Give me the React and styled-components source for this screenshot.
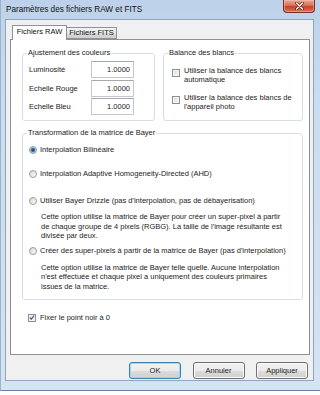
import React from 'react';
import styled, { createGlobalStyle } from 'styled-components';

const Global = createGlobalStyle`
  html, body { margin: 0; padding: 0; background: #ffffff; }
  body {
    width: 320px; height: 395px; overflow: hidden;
    font-family: "Liberation Sans", Arial, sans-serif;
    color: #1c1c1c;
  }
  *, *::before, *::after { box-sizing: border-box; }
`;

const Window = styled.div`
  width: 320px;
  height: 391px;
  display: flex;
  flex-direction: column;
  padding: 0 6px 9px 4px;
  background: linear-gradient(to bottom, #bdd2ea 0%, #cadcef 25%, #d5e3f2 100%);
  border-bottom: 1px solid #6a83a0;
  border-left: 1px solid #9db2cb;
`;

const TitleBar = styled.div`
  height: 19px;
  flex: none;
  display: flex;
  align-items: flex-start;
  justify-content: space-between;
  margin-right: -6px;
  padding-left: 1px;
`;

const Title = styled.div`
  font-size: 8.2px;
  line-height: 19px;
  color: #111;
  white-space: nowrap;
`;

const CloseButton = styled.div`
  width: 32px;
  height: 13px;
  margin-right: 5px;
  display: flex;
  align-items: center;
  justify-content: center;
  border: 1px solid #7a2f22;
  border-top: none;
  border-radius: 0 0 4px 4px;
  background: linear-gradient(to bottom, #e9a996 0%, #d9705a 45%, #c4432b 55%, #d5765b 100%);
  box-shadow: inset 0 0 0 1px rgba(255, 200, 180, 0.45);
`;

const Client = styled.div`
  flex: 1;
  display: flex;
  flex-direction: column;
  background: #f0f0f0;
  border: 1px solid #8fa5bf;
  padding: 5px 3px 0 4px;
`;

const TabRow = styled.div`
  display: flex;
  align-items: flex-end;
  height: 14px;
  padding-left: 2px;
  flex: none;
`;

const Tab = styled.div`
  position: relative;
  z-index: ${(p) => (p.$active ? 2 : 1)};
  width: ${(p) => p.$w}px;
  height: ${(p) => (p.$active ? 15 : 12)}px;
  margin-bottom: ${(p) => (p.$active ? -1 : 0)}px;
  margin-left: ${(p) => (p.$active ? 0 : -1)}px;
  border: 1px solid #8e9199;
  border-bottom: ${(p) => (p.$active ? 'none' : '1px solid #8e9199')};
  background: ${(p) =>
    p.$active ? '#ffffff' : 'linear-gradient(to bottom, #f3f3f3 0%, #ebebeb 50%, #dddddd 51%, #cfcfcf 100%)'};
  font-size: 7.5px;
  line-height: ${(p) => (p.$active ? 12 : 10)}px;
  text-align: center;
  white-space: nowrap;
  color: #111;
`;

const Panel = styled.div`
  flex: none;
  height: 316px;
  background: #ffffff;
  border: 1px solid #8e9199;
  padding: 8px 7px 0 11px;
  display: flex;
  flex-direction: column;
`;

const TopRow = styled.div`
  display: grid;
  grid-template-columns: 133px 140px;
  column-gap: 8px;
`;

const Group = styled.fieldset`
  margin: ${(p) => p.$mt || 0}px 0 0 0;
  padding: 0;
  min-width: 0;
  width: ${(p) => (p.$w ? `${p.$w}px` : 'auto')};
  height: ${(p) => p.$h}px;
  border: 1px solid #d5dfe5;
  border-radius: 3px;
`;

const Legend = styled.legend`
  margin-left: 4px;
  padding: 0 1px;
  font-size: 7.5px;
  line-height: 10px;
  color: #1c1c1c;
  white-space: nowrap;
`;

const GroupBody = styled.div`
  padding: ${(p) => p.$pad};
  display: flex;
  flex-direction: column;
  gap: ${(p) => p.$gap || 0}px;
`;

const FieldRow = styled.div`
  display: grid;
  grid-template-columns: 62px 43px;
  align-items: center;
  height: 17px;
  margin-bottom: ${(p) => p.$mb || 0}px;
`;

const Label = styled.span`
  font-size: 7.5px;
  line-height: 10px;
  white-space: nowrap;
`;

const Field = styled.input`
  width: 43px;
  height: 17px;
  margin: 0;
  padding: 0 3px 0 0;
  border: 1px solid #c4c7ce;
  border-top-color: #a4a8b0;
  background: #fff;
  font-family: "Liberation Sans", Arial, sans-serif;
  font-size: 7.5px;
  color: #1c1c1c;
  text-align: right;
  outline: none;
`;

const CheckRow = styled.div`
  display: flex;
  align-items: flex-start;
  gap: ${(p) => p.$gap}px;
  margin-top: ${(p) => p.$mt || 0}px;
  padding-left: ${(p) => p.$pl || 0}px;
`;

const Box = styled.span`
  flex: none;
  width: 8px;
  height: 8px;
  margin-top: ${(p) => p.$mt}px;
  border: 1px solid #8e8f8f;
  background: linear-gradient(135deg, #d6d6d6 0%, #ececec 55%, #fbfbfb 100%);
  box-shadow: inset 0 0 0 1px #f4f4f4;
  display: flex;
  align-items: center;
  justify-content: center;
`;

const CheckText = styled.span`
  font-size: 7.5px;
  line-height: ${(p) => p.$lh || 10}px;
  white-space: nowrap;
`;

const Radio = styled.span`
  flex: none;
  width: 8px;
  height: 8px;
  border-radius: 50%;
  border: 1px solid #9a9b9c;
  background: ${(p) =>
    p.$on
      ? 'radial-gradient(circle at 50% 50%, #0d3f78 0%, #2a6aa8 35%, #a9c4de 60%, #e6e6e6 100%)'
      : 'linear-gradient(135deg, #d4d4d4 0%, #eeeeee 60%, #fafafa 100%)'};
`;

const OptionRow = styled.div`
  display: flex;
  align-items: center;
  gap: 3px;
  height: 10px;
  margin-top: ${(p) => p.$mt}px;
`;

const Desc = styled.div`
  margin-left: 12px;
  margin-top: ${(p) => p.$mt}px;
  font-size: 7.5px;
  line-height: 9.6px;
  white-space: nowrap;
`;

const ButtonRow = styled.div`
  display: flex;
  justify-content: flex-end;
  gap: 11.5px;
  margin-top: 7px;
  padding-right: 2px;
`;

const Button = styled.div`
  width: 52px;
  height: 17px;
  border: 1px solid ${(p) => (p.$default ? '#3c7fb1' : '#707070')};
  border-radius: 3px;
  background: linear-gradient(to bottom, #f2f2f2 0%, #ebebeb 50%, #dddddd 51%, #cfcfcf 100%);
  box-shadow: inset 0 0 0 1px ${(p) => (p.$default ? '#9fd6f5' : '#fbfbfb')};
  font-size: 7.5px;
  line-height: 15px;
  text-align: center;
  color: #1c1c1c;
`;

const Check = () => (
  <svg width="7" height="7" viewBox="0 0 7 7">
    <path d="M1 3.6 L2.8 5.4 L6 1.2" fill="none" stroke="#3b4f8c" strokeWidth="1.3" />
  </svg>
);

const CloseX = () => (
  <svg width="9" height="8" viewBox="0 0 9 8">
    <path d="M1.5 1 L7.5 7 M7.5 1 L1.5 7" stroke="#5a1d14" strokeWidth="2.6" strokeLinecap="round" />
    <path d="M1.5 1 L7.5 7 M7.5 1 L1.5 7" stroke="#ffffff" strokeWidth="1.4" strokeLinecap="round" />
  </svg>
);

export default function App() {
  return (
    <>
      <Global />
      <Window>
        <TitleBar>
          <Title>Paramètres des fichiers RAW et FITS</Title>
          <CloseButton>
            <CloseX />
          </CloseButton>
        </TitleBar>
        <Client>
          <TabRow>
            <Tab $active $w={55}>Fichiers RAW</Tab>
            <Tab $w={51}>Fichiers FITS</Tab>
          </TabRow>
          <Panel>
            <TopRow>
              <Group $h={73}>
                <Legend>Ajustement des couleurs</Legend>
                <GroupBody $pad="3px 0 0 6px">
                  <FieldRow $mb={2}>
                    <Label>Luminosité</Label>
                    <Field readOnly value="1.0000" />
                  </FieldRow>
                  <FieldRow $mb={1}>
                    <Label>Echelle Rouge</Label>
                    <Field readOnly value="1.0000" />
                  </FieldRow>
                  <FieldRow>
                    <Label>Echelle Bleu</Label>
                    <Field readOnly value="1.0000" />
                  </FieldRow>
                </GroupBody>
              </Group>
              <Group $h={73}>
                <Legend>Balance des blancs</Legend>
                <GroupBody $pad="7.5px 0 0 8px" $gap={8}>
                  <CheckRow $gap={4}>
                    <Box $mt={3.5} />
                    <CheckText $lh={9.5}>
                      Utiliser la balance des blancs
                      <br />
                      automatique
                    </CheckText>
                  </CheckRow>
                  <CheckRow $gap={4}>
                    <Box $mt={3.5} />
                    <CheckText $lh={9.5}>
                      Utiliser la balance des blancs de
                      <br />
                      l'appareil photo
                    </CheckText>
                  </CheckRow>
                </GroupBody>
              </Group>
            </TopRow>
            <Group $h={172} $mt={7} $w={281}>
              <Legend>Transformation de la matrice de Bayer</Legend>
              <GroupBody $pad="0 0 0 6px">
                <OptionRow $mt={7}>
                  <Radio $on />
                  <Label>Interpolation Bilinéaire</Label>
                </OptionRow>
                <OptionRow $mt={14}>
                  <Radio />
                  <Label>Interpolation Adaptive Homogeneity-Directed (AHD)</Label>
                </OptionRow>
                <OptionRow $mt={17}>
                  <Radio />
                  <Label>Utiliser Bayer Drizzle (pas d'interpolation, pas de débayerisation)</Label>
                </OptionRow>
                <Desc $mt={6}>
                  Cette option utilise la matrice de Bayer pour créer un super-pixel à partir
                  <br />
                  de chaque groupe de 4 pixels (RGBG). La taille de l'image résultante est
                  <br />
                  divisée par deux.
                </Desc>
                <OptionRow $mt={5}>
                  <Radio />
                  <Label>Créer des super-pixels à partir de la matrice de Bayer (pas d'interpolation)</Label>
                </OptionRow>
                <Desc $mt={7}>
                  Cette option utilise la matrice de Bayer telle quelle. Aucune interpolation
                  <br />
                  n'est effectuée et chaque pixel a uniquement des couleurs primaires
                  <br />
                  issues de la matrice.
                </Desc>
              </GroupBody>
            </Group>
            <CheckRow $gap={4} $mt={13} $pl={6}>
              <Box $mt={0.5}>
                <Check />
              </Box>
              <CheckText>Fixer le point noir à 0</CheckText>
            </CheckRow>
          </Panel>
          <ButtonRow>
            <Button $default>OK</Button>
            <Button>Annuler</Button>
            <Button>Appliquer</Button>
          </ButtonRow>
        </Client>
      </Window>
    </>
  );
}
